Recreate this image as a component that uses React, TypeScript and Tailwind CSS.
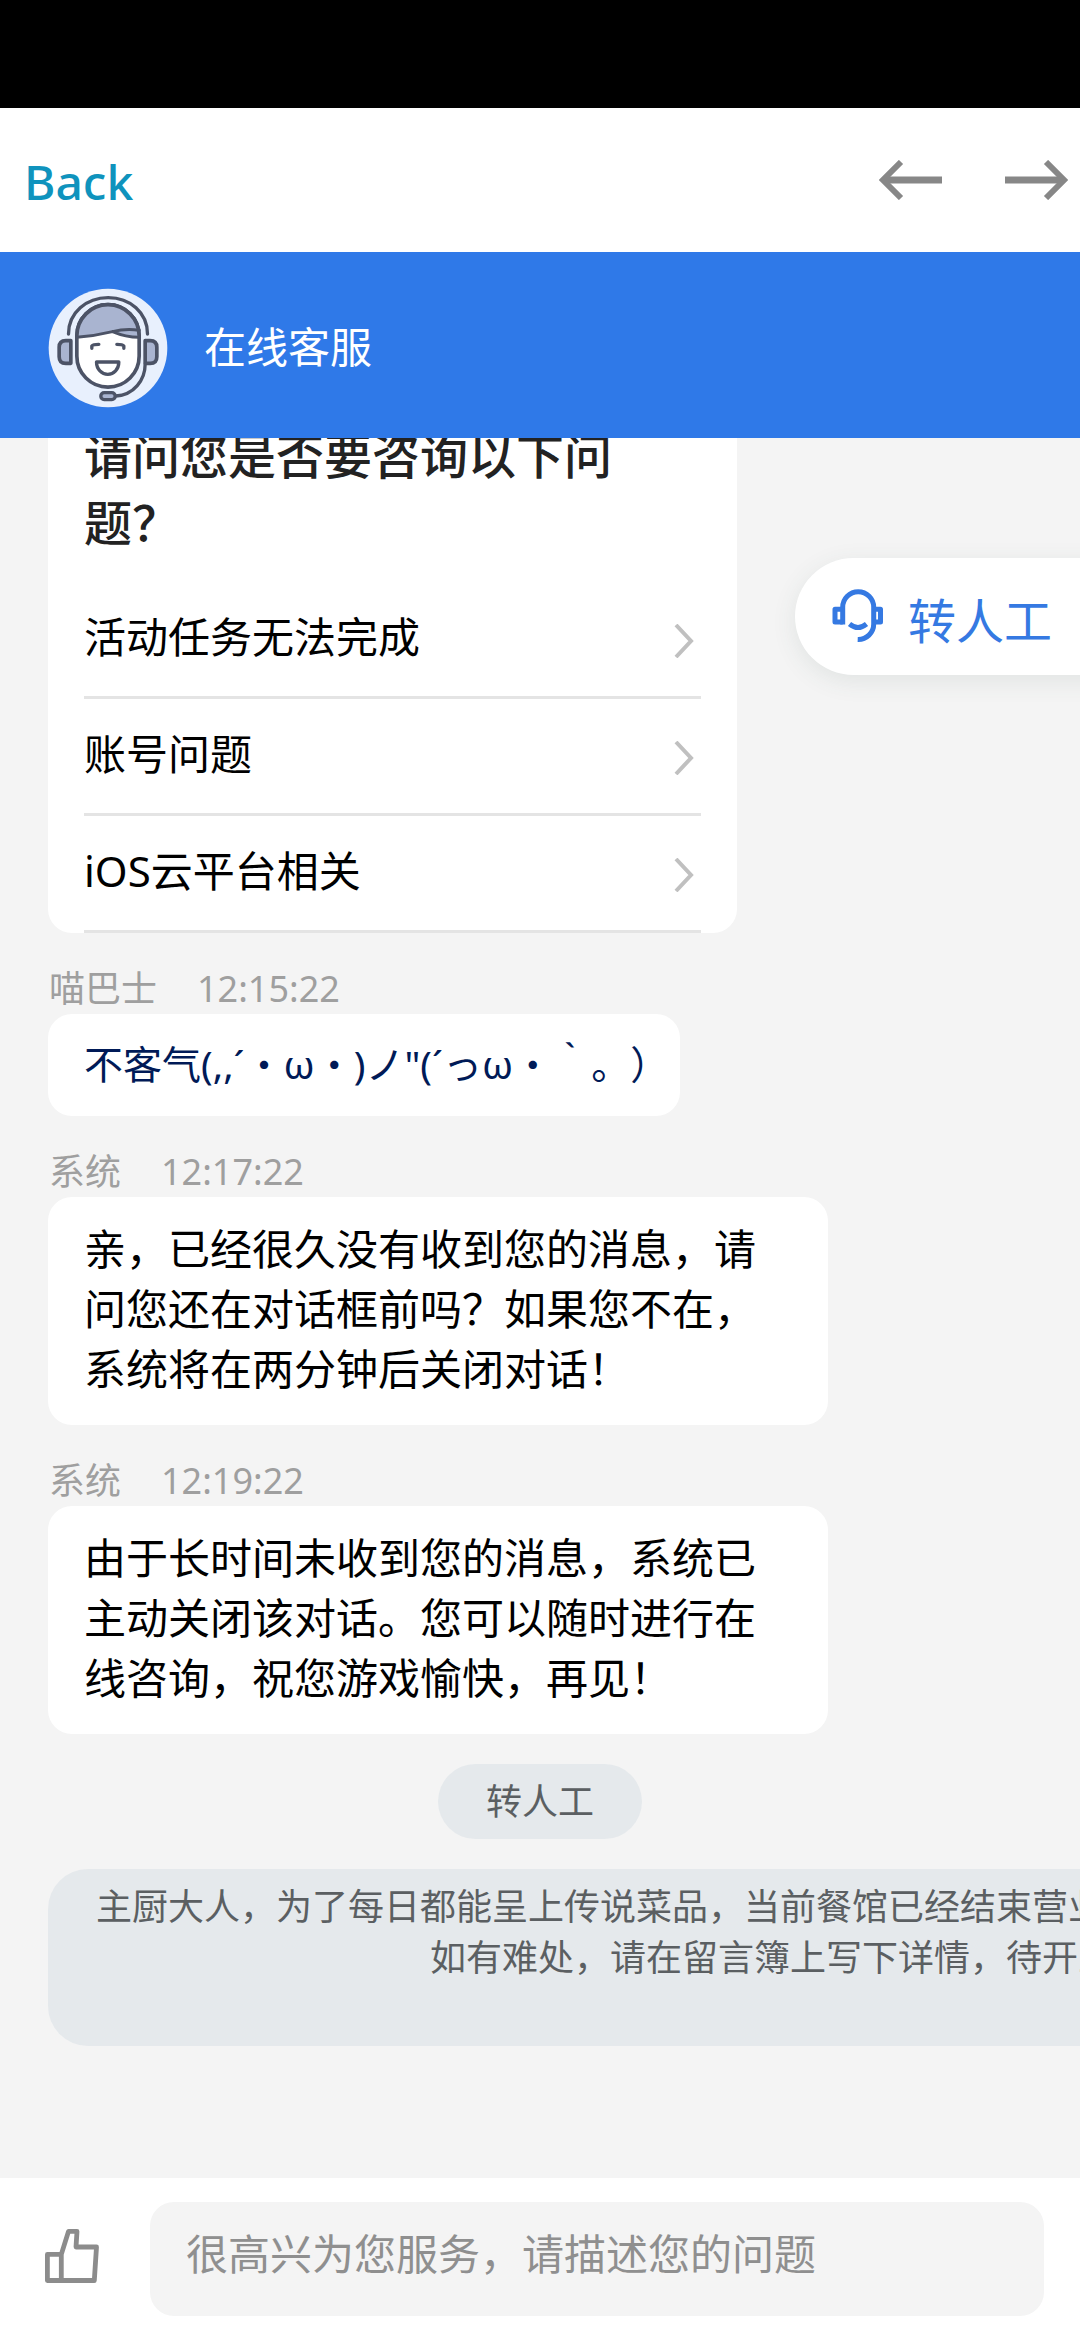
import React from 'react';

const questions = ['活动任务无法完成', '账号问题', 'iOS云平台相关'];

const ArrowIcon: React.FC<{ flip?: boolean }> = ({ flip }) => (
    <svg width="63" height="40" viewBox="0 0 63 40" fill="none" stroke="#878787" className={flip ? 'rotate-180' : ''}>
        <path d="M22 2 L4 20 L22 38" strokeWidth="6" />
        <path d="M4 20 H63" strokeWidth="7" />
    </svg>
);

const ChevronIcon = () => (
    <svg width="20" height="34" viewBox="0 0 20 34" className="mt-1">
        <path d="M2 1 L17 17 L2 33" fill="none" stroke="#c0c0c0" strokeWidth="4" />
    </svg>
);

const Avatar = () => (
    <svg width="120" height="120" viewBox="24.500 24 360 360" className="shrink-0">
        <circle cx="204.500" cy="204" r="178" fill="#e8f0fd" />
        <g fill="none" stroke="#4c5366" strokeWidth="11" strokeLinecap="round" strokeLinejoin="round">
            {/* headband */}
            <path d="M86 162 C86 98 140 53 205 53 C270 53 323 98 323 162" strokeWidth="10" />
            {/* face and hair */}
            <path d="M111 168 A93.500 94 0 0 1 298 168 V228 A93.500 93.500 0 0 1 111 228 Z" fill="#fff" />
            <path d="M111 172 Q165 168 218 155 Q258 172 298 170 V168 A93.500 94 0 0 0 111 168 Z" fill="#a9b4d0" stroke="none" />
            <path d="M111 172 Q165 168 218 155 Q258 145 298 151 M218 155 Q258 172 298 172" strokeWidth="9" />
            <path d="M111 168 A93.500 94 0 0 1 298 168" />
            <path d="M156 205 V198 Q160 193 177 193 M252 205 V198 Q248 193 231 193" strokeWidth="10" />
            <path d="M170 246 H237 C237 268 222 283 204 283 C186 283 170 268 170 246 Z" fill="#fff" strokeWidth="10" />
            {/* ear cups */}
            <path d="M93 182 H78 Q58 182 58 202 V230 Q58 250 78 250 H93 Z" fill="#a9b4d0" />
            <path d="M316 182 H331 Q351 182 351 202 V230 Q351 250 331 250 H316 Z" fill="#a9b4d0" />
            {/* microphone */}
            <path d="M228 348 C282 345 316 300 316 252" strokeWidth="10" />
            <rect x="183" y="338" width="43" height="21" rx="10" fill="#a9b4d0" strokeWidth="10" />
        </g>
    </svg>
);

const HeadsetIcon = () => (
    <svg width="52" height="54" viewBox="0 0 52 54" fill="none" stroke="#3579e2" strokeWidth="5" className="-mt-0.5">
        <path d="M10.700 35.500 V18.200 A15.500 15.500 0 0 1 41.700 18.200 V35 A15.500 15.500 0 0 1 25.700 50.500" />
        <path d="M10.700 20.200 H3 V33 H10.700 M41.700 20.200 H48.500 V33 H41.700" strokeLinejoin="round" />
        <path d="M17.500 35 Q26 42 34.500 35" />
    </svg>
);

const ThumbIcon = () => (
    <svg width="54" height="54" viewBox="0 0 54 54" fill="none" stroke="#8c8c8c" strokeWidth="4.800" strokeLinejoin="round">
        <path d="M2.400 25.400 H16.300 L23.500 2.400 H32 L31 18 H51.500 L49.300 51.500 H2.400 Z M16.300 25.400 V51.500" />
    </svg>
);

const Label: React.FC<{ name: string; time: string }> = ({ name, time }) => (
    <div className="flex h-[54px] items-center gap-10 pt-0.5 pl-px text-4xl leading-[51px] text-[#9f9f9f]">
        <span>{name}</span>
        <span>{time}</span>
    </div>
);

export default function App() {
    return (
        <div className="flex h-[2340px] w-[1080px] flex-col overflow-hidden bg-[#f4f4f4] font-['Noto_Sans','Noto_Sans_CJK_SC',sans-serif]">
            <div className="h-[108px] shrink-0 bg-black" />
            <nav className="flex h-36 shrink-0 items-center justify-between bg-white pr-3 pl-6">
                <span className="pt-[3px] text-5xl font-medium text-[#0f93bd]">Back</span>
                <div className="flex gap-[63px]">
                    <ArrowIcon />
                    <ArrowIcon flip />
                </div>
            </nav>
            <header className="flex h-[186px] shrink-0 items-center gap-9 bg-[#2f79e8] px-12 pt-1.5 text-[42px] text-white">
                <Avatar />
                <h1 className="pb-1">在线客服</h1>
            </header>

            <main className="relative flex h-[1740px] shrink-0 flex-col items-start overflow-hidden px-12">
                <section className="-mt-6 flex h-[519px] w-[689px] shrink-0 flex-col rounded-[24px] bg-white px-9">
                    <h2 className="mt-2 text-5xl leading-[67px] font-medium text-[#222]">请问您是否要咨询以下问题？</h2>
                    <ul className="mt-auto text-[42px] text-black">
                        {questions.map(q => (
                            <li key={q} className="flex h-[117px] items-center justify-between border-b-3 border-[#e4e4e4] pr-[7px]">
                                <span className="pb-[5px]">{q}</span>
                                <ChevronIcon />
                            </li>
                        ))}
                    </ul>
                </section>

                <div className="mt-[27px]">
                    <Label name="喵巴士" time="12:15:22" />
                    <p className="flex h-[102px] w-[632px] items-center rounded-[24px] bg-white px-9 pb-0.5 text-[39px] whitespace-nowrap text-[#001a57] [text-spacing-trim:space-all]">
                        不客气(,,´・ω・)ノ"(´っω・｀。）
                    </p>
                </div>
                <div className="mt-[27px]">
                    <Label name="系统" time="12:17:22" />
                    <p className="w-[780px] rounded-[24px] bg-white px-9 pt-[22px] pb-[26px] text-[42px] leading-[60px] text-black">
                        亲，已经很久没有收到您的消息，请问您还在对话框前吗？如果您不在，系统将在两分钟后关闭对话！
                    </p>
                </div>
                <div className="mt-[27px]">
                    <Label name="系统" time="12:19:22" />
                    <p className="w-[780px] rounded-[24px] bg-white px-9 pt-[22px] pb-[26px] text-[42px] leading-[60px] text-black">
                        由于长时间未收到您的消息，系统已主动关闭该对话。您可以随时进行在线咨询，祝您游戏愉快，再见！
                    </p>
                </div>
                <button className="mt-[30px] h-[75px] w-[204px] shrink-0 self-center rounded-full bg-[#e5e9ec] text-4xl text-[#5b5f62]">转人工</button>
                {/* runs off the right edge of the screen */}
                <div className="mt-[30px] h-[177px] w-[1200px] shrink-0 rounded-[40px] bg-[#e5e9ec] px-12 pt-3 text-4xl leading-[51px] whitespace-nowrap text-[#5b5f62]">
                    <p>主厨大人，为了每日都能呈上传说菜品，当前餐馆已经结束营业</p>
                    <p className="pl-[334px]">如有难处，请在留言簿上写下详情，待开业</p>
                </div>

                <button className="absolute top-[120px] left-[795px] flex h-[117px] w-[320px] items-center gap-6 rounded-l-full bg-white pl-[37px] text-5xl text-[#3579e2] shadow-[0_6px_24px_rgba(60,90,80,0.1)]">
                    <HeadsetIcon />
                    <span className="pt-2">转人工</span>
                </button>
            </main>

            <footer className="flex h-[162px] shrink-0 items-start bg-white pt-6 pr-9 pl-[45px]">
                <div className="mt-[27px] mr-[51px]">
                    <ThumbIcon />
                </div>
                <div className="flex h-[114px] flex-1 items-center rounded-[24px] bg-[#f4f4f4] px-9 pb-[11px] text-[42px] text-[#8f8f8f]">
                    很高兴为您服务，请描述您的问题
                </div>
            </footer>
        </div>
    );
}
